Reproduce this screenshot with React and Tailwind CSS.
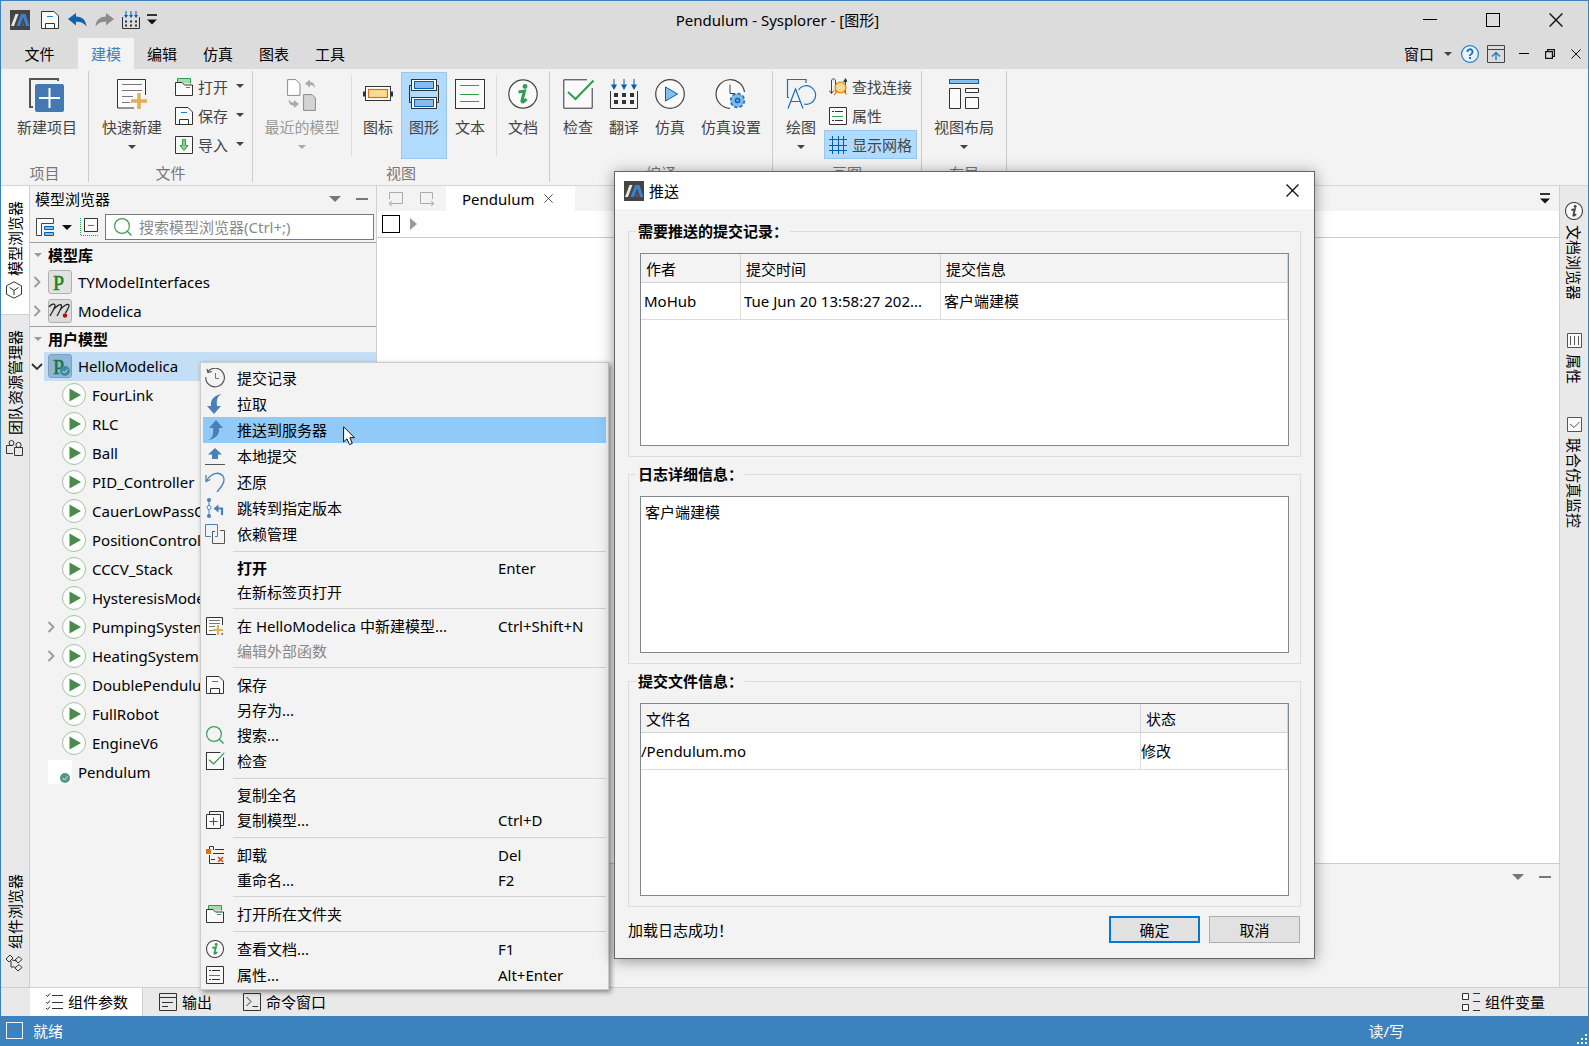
import React from 'react';

/* ---------- icons ---------- */

const Logo = () => (
  <svg width="20" height="20" viewBox="0 0 20 20" className="shrink-0">
    <rect width="20" height="20" fill="#444" />
    <path d="M1 16L5.500 4H8.500L4 16Z" fill="#e6e6e6" />
    <path d="M6.500 16L11 4H15.500L19.500 16H16L13.300 7.500L10 16Z" fill="#3f7fc6" />
    <path d="M11.500 16L13.300 11L14.500 16Z" fill="#3f7fc6" opacity=".5" />
  </svg>
);

const Caret = ({ w = 8, color = '#444' }) => (
  <svg width={w} height={w / 2} viewBox="0 0 8 4" className="shrink-0">
    <path d="M0 0H8L4 4Z" fill={color} />
  </svg>
);

const CaretBar = () => (
  <svg width="10" height="11" viewBox="0 0 10 11" className="shrink-0">
    <path d="M0 1H10" stroke="#333" strokeWidth="2" />
    <path d="M0 5.500H10L5 10.500Z" fill="#111" />
  </svg>
);

const Dash = () => <span className="block h-[2px] w-3 bg-[#777]" />;

const Cross = ({ size = 12, color = '#111' }) => (
  <svg width={size} height={size} viewBox="0 0 12 12" className="shrink-0">
    <path d="M.5 .5L11.500 11.500M11.500 .5L.5 11.500" stroke={color} strokeWidth="1.2" />
  </svg>
);

const Chevron = () => (
  <svg width="8" height="12" viewBox="0 0 8 12" className="shrink-0">
    <path d="M1.500 1L6.500 6L1.500 11" fill="none" stroke="#999" strokeWidth="1.8" />
  </svg>
);

const Svg18 = ({ children }) => (
  <svg width="18" height="18" viewBox="0 0 18 18" fill="none" className="shrink-0">{children}</svg>
);

const Svg30 = ({ children }) => (
  <svg width="30" height="30" viewBox="0 0 30 30" fill="none" className="shrink-0 overflow-visible">{children}</svg>
);

const SaveIcon = () => (
  <Svg18>
    <path d="M.5 .5H13L17.500 5V17.500H.5Z" fill="#fafafa" stroke="#333" />
    <path d="M4.500 17.500V12.500H13.500V17.500" stroke="#333" />
    <path d="M6 5.500H12" stroke="#1a7fc4" />
  </Svg18>
);

const CompileIcon = () => (
  <Svg18>
    <path d="M.5 6V17.500H17.500V6" stroke="#333" />
    <path d="M4 0V6M9 0V6M14 0V6" stroke="#0060b0" />
    <path d="M2 4H6L4 7ZM7 4H11L9 7ZM12 4H16L14 7Z" fill="#0060b0" />
    <path d="M3 10.500H15M3 14.500H15" stroke="#333" strokeWidth="2" strokeDasharray="2 3" />
  </Svg18>
);

const UndoIcon = () => (
  <svg width="19" height="14" viewBox="0 0 19 14" className="shrink-0">
    <path d="M0 6L8 0V3.500C14 3.500 18 7 18.500 13.500C16 10 13 8.500 8 8.800V12.500Z" fill="#0f62ae" />
  </svg>
);

const RedoIcon = () => (
  <svg width="19" height="14" viewBox="0 0 19 14" className="shrink-0">
    <path d="M19 6L11 0V3.500C5 3.500 1 7 .5 13.500C3 10 6 8.500 11 8.800V12.500Z" fill="#8c8c8c" />
  </svg>
);

const HelpIcon = () => (
  <Svg18>
    <circle cx="9" cy="9" r="8.400" fill="#eaf3fa" stroke="#1a7fc4" strokeWidth="1.200" />
    <path d="M6.500 7A2.500 2.500 0 1 1 10.200 9C9.200 9.500 9 10 9 11" stroke="#1a6fb8" strokeWidth="1.800" />
    <rect x="8" y="12" width="2" height="2" fill="#1a6fb8" />
  </Svg18>
);

const CollapseRibbonIcon = () => (
  <Svg18>
    <path d="M.5 .5H17.500V17.500H.5ZM.5 4.500H17.500" stroke="#444" />
    <path d="M9 15V8M5 11.500L9 7.500L13 11.500" stroke="#1a7fc4" strokeWidth="1.400" />
  </Svg18>
);

const RestoreIcon = () => (
  <svg width="10" height="10" viewBox="0 0 10 10" fill="none">
    <path d="M.6 2.600H7.400V9.400H.6Z" stroke="#111" strokeWidth="1.200" />
    <path d="M2.600 2.600V.6H9.400V7.400H7.400" stroke="#111" strokeWidth="1.200" />
  </svg>
);

const NewProjectIcon = () => (
  <svg width="36" height="34" viewBox="0 1 36 34" fill="none" className="shrink-0 overflow-visible">
    <path d="M29 3V1H1V29H4" stroke="#555" strokeWidth="2" />
    <rect x="6" y="6" width="29" height="28" rx="2" fill="#4478b0" />
    <path d="M10 20H31M20.500 10V30" stroke="#fff" strokeWidth="2" />
  </svg>
);

const QuickNewIcon = () => (
  <Svg30>
    <path d="M17 29H.5V.5H28.500V16" fill="#fcfcfc" stroke="#333" />
    <path d="M5 5.500H25M5 11.500H25M5 17.500H16M5 23.500H13" stroke="#777" />
    <path d="M22 14V30M14 22H30" stroke="#dfb05a" strokeWidth="3.500" />
  </Svg30>
);

const RecentIcon = () => (
  <Svg30>
    <path d="M.6 .6H9L13 5V16.400H.6Z" fill="#fff" stroke="#8a8a8a" />
    <path d="M16.600 15.600H25L28.400 19V31.400H16.600Z" fill="#d4d4d4" stroke="#8a8a8a" />
    <path d="M18 4.500L23 .5V3C26 3 28 5 28 9C27 7 25.500 6 23 6V8.500ZM12 25L7 21V23.500C4 23.500 2.500 22.500 2 20C1 24 4 27 7 26.500V29Z" fill="#aaa" />
  </Svg30>
);

const IconViewIcon = () => (
  <Svg30>
    <path d="M0 12.500H3V17.500H0ZM27 12.500H30V17.500H27Z" fill="#333" />
    <rect x="2.500" y="7.500" width="25" height="14" fill="#fff" stroke="#333" />
    <rect x="5.500" y="10.500" width="19" height="8" fill="#f8dc90" stroke="#d96d10" strokeWidth="1.200" />
  </Svg30>
);

const DiagramViewIcon = () => (
  <Svg30>
    <path d="M3 6.500H.5V23.500H3M27 6.500H29.500V23.500H27" stroke="#333" />
    <rect x="2.500" y=".5" width="25" height="11" fill="#fff" stroke="#333" />
    <rect x="5.500" y="2.500" width="19" height="7" fill="#86bdee" stroke="#0060b0" />
    <rect x="2.500" y="18.500" width="25" height="11" fill="#fff" stroke="#333" />
    <rect x="5.500" y="20.500" width="19" height="7" fill="#86bdee" stroke="#0060b0" />
  </Svg30>
);

const TextViewIcon = () => (
  <Svg30>
    <rect x=".5" y=".5" width="29" height="29" fill="#fafafa" stroke="#333" />
    <path d="M5 6.500H24M5 15.500H24M5 22.500H24" stroke="#2f9e4f" />
  </Svg30>
);

const InfoIcon = ({ size = 30, color = '#2f9e4f' }) => (
  <svg width={size} height={size} viewBox="0 0 30 30" fill="none" className="shrink-0">
    <circle cx="15" cy="15" r="14.200" fill="#fafafa" stroke="#444" strokeWidth={size > 20 ? 1.2 : 1.8} />
    <circle cx="17" cy="7.500" r="2.400" fill={color} />
    <path d="M10.500 13L16.500 12L14 21.500C13.600 24 16 23 18.500 20" stroke={color} strokeWidth="3" />
  </svg>
);

const CheckIcon = ({ size = 30 }) => (
  <svg width={size} height={size} viewBox="0 0 30 30" fill="none" className="shrink-0 overflow-visible">
    <path d="M24 .8H.8V29.200H29.200V9" fill="#fafafa" stroke="#333" strokeWidth={size > 20 ? 1 : 1.7} />
    <path d="M5 13L12.500 20L30.500 1.500" stroke="#2f9e4f" strokeWidth="2" />
  </svg>
);

const TranslateIcon = () => (
  <Svg30>
    <path d="M1.500 12V29.500H28.500V12" stroke="#333" />
    <path d="M5 0V7M15 0V7M25 0V7" stroke="#0060b0" />
    <path d="M2 5.500H8L5 11ZM12 5.500H18L15 11ZM22 5.500H28L25 11Z" fill="#0060b0" />
    <path d="M5 16H25M5 23H25" stroke="#333" strokeWidth="4" strokeDasharray="4 4" />
  </Svg30>
);

const SimulateIcon = () => (
  <Svg30>
    <circle cx="15" cy="15" r="14.300" fill="#fafafa" stroke="#444" strokeWidth="1.200" />
    <path d="M10.500 8L22.500 15L10.500 22Z" fill="#86bdee" stroke="#0060b0" />
  </Svg30>
);

const SimSettingsIcon = () => (
  <Svg30>
    <path d="M28.500 13A14.300 14.300 0 1 0 14 29.300" fill="#fafafa" stroke="#444" strokeWidth="1.200" />
    <path d="M14 5.500V14.500H19" stroke="#444" />
    <circle cx="21.500" cy="21.500" r="6.800" fill="#7db8ea" stroke="#1a6fb8" strokeWidth="1.800" strokeDasharray="3.300 2" />
    <circle cx="21.500" cy="21.500" r="6" fill="#7db8ea" />
    <circle cx="21.500" cy="21.500" r="2" stroke="#0060b0" strokeWidth="1.400" />
  </Svg30>
);

const DrawIcon = () => (
  <Svg30>
    <path d="M20 4V.5H1.500V18.500H3M2 29.500L9.500 10L17 29.500M5 22.500H14" stroke="#1a6fb8" strokeWidth="1.200" />
    <path d="M12.500 11A9.300 9.300 0 1 1 18 25" stroke="#1a6fb8" strokeWidth="1.200" />
  </Svg30>
);

const LayoutIcon = () => (
  <Svg30>
    <rect x=".5" y=".5" width="29" height="4" fill="#86bdee" stroke="#0060b0" />
    <path d="M.5 9.500H11.500V29.500H.5ZM16.500 9.500H29.500V13.500H16.500ZM16.500 18.500H29.500V29.500H16.500Z" fill="#fafafa" stroke="#333" />
  </Svg30>
);

const OpenIcon = () => (
  <Svg18>
    <path d="M2.500 5V.5H15.500V5.500" fill="#a5dcae" stroke="#2f9e4f" />
    <path d="M.5 4.500H7L9.500 7H17.500V17.500H.5Z" fill="#fafafa" stroke="#333" />
    <path d="M11 9.500H15" stroke="#2f9e4f" />
  </Svg18>
);

const ImportIcon = () => (
  <Svg18>
    <path d="M.5 .5H17.500V17.500H.5Z" fill="#fafafa" stroke="#333" />
    <path d="M7.500 3.500H10.500V9.500H13L9 14.500L5 9.500H7.500Z" fill="#8fd09b" stroke="#2f9e4f" />
  </Svg18>
);

const FindLinkIcon = () => (
  <Svg18>
    <path d="M2.500 15V3C2.500 0 6.500 0 6.500 3V13.500M0 12.500L2.500 15.500L5 12.500M16.500 15V4" stroke="#444" />
    <path d="M14 4H19L16.500 0Z" fill="#333" />
    <circle cx="11.500" cy="9.500" r="5.400" fill="#f8dc90" stroke="#e08a20" strokeWidth="1.300" />
    <path d="M8 13.500L5 17M15 13.500L17.500 16.500" stroke="#e08a20" strokeWidth="1.300" />
  </Svg18>
);

const PropsIcon = () => (
  <Svg18>
    <path d="M.5 .5H17.500V17.500H.5Z" fill="#fafafa" stroke="#333" />
    <path d="M3 4.500H5M6 4.500H14M3 13.500H5M6 13.500H14" stroke="#333" />
    <path d="M3 9.500H14" stroke="#2f9e4f" />
  </Svg18>
);

const GridIcon = () => (
  <Svg18>
    <path d="M3.500 0V18M9.500 0V18M14.500 0V18M0 3.500H18M0 9.500H18M0 14.500H18" stroke="#0060b0" />
  </Svg18>
);

const SearchIcon = () => (
  <Svg18>
    <circle cx="8" cy="8" r="7.400" stroke="#3a9e58" strokeWidth="1.200" />
    <path d="M13 13L17.500 17.500" stroke="#3a9e58" strokeWidth="1.400" />
  </Svg18>
);

const CubeIcon = () => (
  <Svg18>
    <path d="M8 .8L15.500 4.800V13.200L8 17.200L.5 13.200V4.800Z" stroke="#333" />
    <path d="M3.500 6.500L8 9.500L12.500 6.500M8 9.500V14" stroke="#333" />
  </Svg18>
);

const TeamIcon = () => (
  <Svg18>
    <path d="M7 13.500H.5V5.500H7" stroke="#333" />
    <circle cx="5.500" cy="3" r="2.500" stroke="#333" />
    <path d="M8.500 7.500H16.500V15.500H8.500Z" stroke="#333" />
    <circle cx="12.500" cy="5" r="2.600" stroke="#333" />
  </Svg18>
);

const ComponentIcon = () => (
  <Svg18>
    <path d="M0 5L4 1L7 4L3 8ZM9 6L13 2.500L16 5.500L12 9ZM9 14L13 10.500L16 13.500L12 17ZM6 6L11 7M5 7V13H9" stroke="#333" />
  </Svg18>
);

const SlidersIcon = () => (
  <Svg18>
    <path d="M2.500 2.500H16.500V16.500H2.500Z" fill="#fafafa" stroke="#555" />
    <path d="M5.500 5V14M9.500 5V14M13.500 5V14" stroke="#555" />
  </Svg18>
);

const MonitorIcon = () => (
  <Svg18>
    <path d="M2.500 2.500H16.500V16.500H2.500Z" fill="#fafafa" stroke="#555" />
    <path d="M5 9L9 12.500L14.500 7" stroke="#555" />
  </Svg18>
);

const HistoryIcon = () => (
  <svg width="20" height="20" viewBox="0 0 20 20" fill="none">
    <path d="M3 3.500A9.300 9.300 0 1 1 .8 9" stroke="#555" strokeWidth="1.200" />
    <path d="M2 1L3 4.500L7 3.500" stroke="#555" strokeWidth="1.200" />
    <path d="M10.500 5V10.500H14" stroke="#4a80b8" />
  </svg>
);

const PullIcon = () => (
  <svg width="20" height="20" viewBox="0 0 20 20">
    <path d="M17 0C12 2 11.500 6 12 12H16L9 20L2 12H6C5 6 9 1 17 0Z" fill="#4a80b8" />
  </svg>
);

const PushIcon = () => (
  <svg width="20" height="20" viewBox="0 0 20 20">
    <path d="M3 20C8 18 8.500 14 8 8H4L11 0L18 8H14C15 14 11 19 3 20Z" fill="#4a80b8" />
  </svg>
);

const CommitIcon = () => (
  <svg width="20" height="20" viewBox="0 0 20 20">
    <path d="M10 2L17 8.500H13V13H7V8.500H3Z" fill="#4a80b8" />
    <path d="M0 18.500H20" stroke="#555" />
  </svg>
);

const RevertIcon = () => (
  <svg width="20" height="20" viewBox="0 0 20 20" fill="none">
    <path d="M1.500 9C6 1 14 -1 18 4C21 9 17 14 12 20" stroke="#4a80b8" strokeWidth="1.300" />
    <path d="M1 3V9.500L5.500 7.500" stroke="#4a80b8" strokeWidth="1.300" />
  </svg>
);

const JumpIcon = () => (
  <svg width="20" height="20" viewBox="0 0 20 20" fill="none">
    <path d="M4 2V18" stroke="#4a80b8" />
    <circle cx="4" cy="2" r="2" fill="#4a80b8" />
    <circle cx="4" cy="18" r="2" fill="#4a80b8" />
    <circle cx="4" cy="9.500" r="2" fill="#fff" stroke="#4a80b8" />
    <path d="M17 17V10.500H12" stroke="#4a80b8" strokeWidth="2.200" />
    <path d="M8.500 10.500L13.500 6.500V14.500Z" fill="#4a80b8" />
  </svg>
);

const DependIcon = () => (
  <svg width="20" height="20" viewBox="0 0 20 20" fill="none">
    <path d="M6 12.500H.5V.5H12.500V12.500H10" stroke="#4a80b8" />
    <path d="M10 7.500H7.500V19.500H19.500V6.500H15" stroke="#555" />
  </svg>
);

const NewModelIcon = () => (
  <Svg18>
    <path d="M10 17.500H.5V.5H16.500V8" fill="#fafafa" stroke="#333" />
    <path d="M3 3.500H14M3 6.500H14M3 9.500H9M3 13.500H7" stroke="#777" />
    <path d="M12 8V18M7 13H17" stroke="#dfb05a" strokeWidth="2.200" />
    <path d="M15.500 17H17" stroke="#333" strokeWidth="1.500" />
  </Svg18>
);

const CopyModelIcon = () => (
  <Svg18>
    <path d="M3.500 3V.5H17.500V14.500H14.500" stroke="#333" />
    <path d="M.5 3.500H14.500V17.500H.5Z" fill="#fafafa" stroke="#333" />
    <path d="M7.500 6.500V14.500M3.500 10.500H11.500" stroke="#0060b0" />
  </Svg18>
);

const UnloadIcon = () => (
  <Svg18>
    <path d="M0 3H5V8H0Z" fill="#e07010" />
    <path d="M3.500 3V.5H7.500V4M9 3.500H18M7 7.500H18M3.500 9V17.500H18M5 13.500H9" stroke="#333" />
    <path d="M12 11L17 16M17 11L12 16" stroke="#d9480f" strokeWidth="1.500" />
  </Svg18>
);

const TreeLayoutIcon = () => (
  <Svg18>
    <path d="M.5 .5H17.500V5.500H5.500V17.500H.5Z" fill="#fafafa" stroke="#444" />
    <path d="M8.500 8.500H17.500V11.500H8.500ZM8.500 14.500H17.500V17.500H8.500Z" fill="#86bdee" stroke="#0060b0" />
  </Svg18>
);

const CollapseAllIcon = () => (
  <Svg18>
    <path d="M4.500 .5H17.500V13.500H4.500Z" fill="#fafafa" stroke="#333" />
    <path d="M8 7.500H14" stroke="#2f9e4f" />
    <path d="M.5 0V17.500H18" stroke="#2f9e4f" strokeDasharray="1 1" />
  </Svg18>
);

const ParamsIcon = () => (
  <Svg18>
    <path d="M6 2.500H17M6 9.500H17M6 15.500H17" stroke="#333" />
    <path d="M0 2L1.500 3.500L4 .5M0 9L1.500 10.500L4 7.500M0 15L1.500 16.500L4 13.500" stroke="#333" />
  </Svg18>
);

const OutputIcon = () => (
  <Svg18>
    <path d="M.5 .5H17.500V17.500H.5ZM.5 4.500H17.500M3 9.500H14M3 13.500H9" stroke="#333" />
  </Svg18>
);

const ConsoleIcon = () => (
  <Svg18>
    <path d="M.5 .5H17.500V17.500H.5ZM3.500 4L8 8.500L3.500 13M9.500 13.500H15" stroke="#333" />
  </Svg18>
);

const VarsIcon = () => (
  <Svg18>
    <path d="M.5 .5H6.500V6.500H.5ZM.5 11.500H6.500V17.500H.5Z" fill="#fff" stroke="#333" />
    <path d="M11 .5H18M11 8.500H18M11 17.500H18" stroke="#333" />
  </Svg18>
);

const PackageIcon = ({ selected }) => (
  <svg width="24" height="24" viewBox="0 0 24 24" className="shrink-0">
    <rect x=".5" y=".5" width="23" height="23" rx="2.500" fill={selected ? '#8fb6d8' : '#e2e2e2'} stroke={selected ? '#7f9fbc' : '#b0b0b0'} />
    <text x="5" y="19.500" fontFamily="Liberation Serif, serif" fontSize="20" fill={selected ? '#127a4a' : '#128a12'} stroke={selected ? '#127a4a' : '#128a12'} strokeWidth=".5">P</text>
    {selected && (
      <g>
        <circle cx="17" cy="17" r="5" fill="#3f8ca0" />
        <path d="M14.500 17L16.500 19L19.500 15.500" fill="none" stroke="#d5ecf2" />
      </g>
    )}
  </svg>
);

const ModelicaIcon = () => (
  <svg width="24" height="24" viewBox="0 0 24 24" fill="none" className="shrink-0">
    <rect x=".5" y=".5" width="23" height="23" rx="2.500" fill="#dcdcdc" stroke="#b0b0b0" />
    <path d="M1 8C3 5 7 4 7 6.500C7 9 4 13 2 17M5 11C8 7 13 4 13.500 6.500C14 9 11 13 9 17M12 11C15 7 20 4 21 6C21.500 8 19 11 17.500 14" stroke="#222" strokeWidth="1.300" />
    <circle cx="17" cy="16.500" r="2.200" fill="#b01010" />
  </svg>
);

const ModelIcon = () => (
  <svg width="24" height="24" viewBox="0 0 24 24" className="shrink-0">
    <circle cx="12" cy="12" r="11.500" fill="#fff" stroke="#9cc49f" />
    <path d="M7.500 5.500L19 12L7.500 18.500Z" fill="#4a8a4a" />
  </svg>
);

const PlainModelIcon = () => (
  <svg width="24" height="24" viewBox="0 0 24 24" className="shrink-0">
    <rect width="24" height="24" fill="#fff" />
    <circle cx="17" cy="18" r="5" fill="#4f9a80" />
    <path d="M14.500 18L16.500 20L19.500 16.500" fill="none" stroke="#e0f2ec" />
  </svg>
);

const Cursor = () => (
  <svg width="13" height="20" viewBox="0 0 13 20" className="pointer-events-none absolute left-[342px] top-[425px] z-20">
    <path d="M.6 .8V16L4 12.800L6.500 18.600L9.300 17.400L6.900 11.700H11.500Z" fill="#fff" stroke="#111" />
  </svg>
);

/* ---------- title and menu bar ---------- */

const menus = ['编辑', '仿真', '图表', '工具'];

const TitleBar = () => (
  <header className="bg-[#dcdcdc]">
    <div className="flex h-[37px] items-center pr-px">
      <div className="flex items-center pl-[9px]">
        <Logo />
        <button aria-label="保存" className="ml-[11px]"><SaveIcon /></button>
        <button aria-label="撤销" className="ml-[9px]"><UndoIcon /></button>
        <button aria-label="重做" className="ml-2"><RedoIcon /></button>
        <button aria-label="翻译" className="ml-2"><CompileIcon /></button>
        <button aria-label="更多" className="ml-[7px]"><CaretBar /></button>
      </div>
      <h1 className="flex-1 text-center">Pendulum - Sysplorer - [图形]</h1>
      <button aria-label="最小化" className="flex w-[63px] justify-center"><span className="h-px w-[14px] bg-black" /></button>
      <button aria-label="最大化" className="flex w-[63px] justify-center"><span className="size-[14px] border border-black" /></button>
      <button aria-label="关闭" className="flex w-[63px] justify-center"><Cross size={14} /></button>
    </div>
    <nav className="flex h-[31px] items-stretch">
      <button className="w-[77px]">文件</button>
      <button className="w-14 bg-[#f3f3f3] text-[#3c82be]">建模</button>
      {menus.map((m) => (
        <button key={m} className="w-14">{m}</button>
      ))}
      <div className="ml-auto flex items-center pr-[7px]">
        <button className="flex items-center gap-[10px]">窗口<Caret /></button>
        <button aria-label="帮助" className="ml-[9px]"><HelpIcon /></button>
        <button aria-label="折叠功能区" className="ml-2"><CollapseRibbonIcon /></button>
        <button aria-label="最小化子窗口" className="ml-[14px]"><span className="block h-px w-[10px] bg-black" /></button>
        <button aria-label="还原子窗口" className="ml-4"><RestoreIcon /></button>
        <button aria-label="关闭子窗口" className="ml-4"><Cross size={10} /></button>
      </div>
    </nav>
  </header>
);

/* ---------- ribbon ---------- */

const BigButton = ({ icon, label, caret, active, disabled, wide }) => (
  <button
    disabled={disabled}
    className={`flex h-[87px] shrink-0 flex-col items-center border pt-[6px] ${wide ? 'w-[76px]' : 'w-[46px]'} ${active ? 'border-[#99c8ee] bg-[#b0dbff]' : 'border-transparent'} ${disabled ? 'text-[#999]' : 'text-[#444]'}`}
  >
    <span className="flex h-[30px] justify-center">{icon}</span>
    <span className="mt-2 whitespace-nowrap">{label}</span>
    {caret && <span className="mt-2"><Caret color={disabled ? '#aaa' : '#444'} /></span>}
  </button>
);

const SmallButton = ({ icon, label, caret, active }) => (
  <button className={`flex h-[29px] items-center gap-[5px] border px-1 text-[#444] ${active ? 'border-[#99c8ee] bg-[#b0dbff]' : 'border-transparent'}`}>
    {icon}
    <span>{label}</span>
    {caret && <span className="mb-[2px] ml-[3px]"><Caret /></span>}
  </button>
);

const RibbonGroup = ({ label, className = '', children }) => (
  <section className="flex">
    <div className="flex flex-col">
      <div className={`flex h-[93px] pt-[3px] ${className}`}>{children}</div>
      <div className="text-center leading-[23px] text-[#777]">{label}</div>
    </div>
    <div className="mb-[3px] mt-[2px] w-px bg-[#ccc]" />
  </section>
);

const Divider = () => <div className="mx-[3px] my-[3px] h-[81px] w-px shrink-0 bg-[#dcdcdc]" />;

const Ribbon = () => (
  <div className="flex border-b border-[#d5d5d5] bg-[#f3f3f3]">
    <RibbonGroup label="项目" className="pl-2 pr-[3px]">
      <BigButton wide icon={<NewProjectIcon />} label="新建项目" />
    </RibbonGroup>
    <RibbonGroup label="文件" className="pl-[5px] pr-[3px]">
      <BigButton wide caret icon={<QuickNewIcon />} label="快速新建" />
      <div className="flex flex-col">
        <SmallButton caret icon={<OpenIcon />} label="打开" />
        <SmallButton caret icon={<SaveIcon />} label="保存" />
        <SmallButton caret icon={<ImportIcon />} label="导入" />
      </div>
    </RibbonGroup>
    <RibbonGroup label="视图" className="pl-[11px] pr-[3px]">
      <div className="mr-2"><BigButton wide caret disabled icon={<RecentIcon />} label="最近的模型" /></div>
      <Divider />
      <BigButton icon={<IconViewIcon />} label="图标" />
      <BigButton active icon={<DiagramViewIcon />} label="图形" />
      <BigButton icon={<TextViewIcon />} label="文本" />
      <Divider />
      <BigButton icon={<InfoIcon />} label="文档" />
    </RibbonGroup>
    <RibbonGroup label="编译" className="pl-[5px] pr-[3px]">
      <BigButton icon={<CheckIcon />} label="检查" />
      <BigButton icon={<TranslateIcon />} label="翻译" />
      <BigButton icon={<SimulateIcon />} label="仿真" />
      <BigButton wide icon={<SimSettingsIcon />} label="仿真设置" />
    </RibbonGroup>
    <RibbonGroup label="画图" className="pl-[5px] pr-1">
      <BigButton caret icon={<DrawIcon />} label="绘图" />
      <div className="flex flex-col">
        <SmallButton icon={<FindLinkIcon />} label="查找连接" />
        <SmallButton icon={<PropsIcon />} label="属性" />
        <SmallButton active icon={<GridIcon />} label="显示网格" />
      </div>
    </RibbonGroup>
    <RibbonGroup label="布局" className="px-1">
      <BigButton wide caret icon={<LayoutIcon />} label="视图布局" />
    </RibbonGroup>
  </div>
);

/* ---------- side rails ---------- */

const LeftTab = ({ label, icon, active }) => (
  <button className={`flex flex-col items-center gap-[5px] py-[15px] ${active ? 'border-b border-[#d0d0d0] bg-white' : ''}`}>
    <span className="rotate-180 [text-orientation:sideways] [writing-mode:vertical-rl]">{label}</span>
    {icon}
  </button>
);

const LeftRail = () => (
  <aside className="flex w-[29px] shrink-0 flex-col border-r border-[#d0d0d0] bg-[#e9e9e9]">
    <LeftTab active label="模型浏览器" icon={<CubeIcon />} />
    <LeftTab label="团队资源管理器" icon={<TeamIcon />} />
    <div className="flex-1" />
    <LeftTab label="组件浏览器" icon={<ComponentIcon />} />
  </aside>
);

const RightTab = ({ label, icon }) => (
  <button className="flex flex-col items-center gap-[5px] pb-[15px]">
    {icon}
    <span className="[text-orientation:sideways] [writing-mode:vertical-rl]">{label}</span>
  </button>
);

const RightRail = () => (
  <aside className="flex w-[29px] shrink-0 flex-col gap-4 border-l border-[#d0d0d0] bg-[#e9e9e9] pt-4">
    <RightTab label="文档浏览器" icon={<InfoIcon size={18} color="#444" />} />
    <RightTab label="属性" icon={<SlidersIcon />} />
    <RightTab label="联合仿真监控" icon={<MonitorIcon />} />
  </aside>
);

/* ---------- model browser ---------- */

const models = [
  { name: 'FourLink' },
  { name: 'RLC' },
  { name: 'Ball' },
  { name: 'PID_Controller' },
  { name: 'CauerLowPassOPV' },
  { name: 'PositionControl' },
  { name: 'CCCV_Stack' },
  { name: 'HysteresisModel' },
  { name: 'PumpingSystem', folder: true },
  { name: 'HeatingSystem', folder: true },
  { name: 'DoublePendulum' },
  { name: 'FullRobot' },
  { name: 'EngineV6' },
];

const SectionTitle = ({ children }) => (
  <h3 className="flex h-[25px] items-center gap-[6px] pb-[2px] pl-1 font-bold">
    <Caret color="#999" />{children}
  </h3>
);

const ModelBrowser = () => (
  <section className="flex w-[347px] shrink-0 flex-col border-r border-[#d0d0d0] bg-[#f3f3f3]">
    <div className="flex h-[26px] items-center pl-[5px] pr-2">
      <h2 className="flex-1">模型浏览器</h2>
      <button aria-label="选项"><Caret w={12} color="#777" /></button>
      <button aria-label="隐藏" className="ml-[15px]"><Dash /></button>
    </div>
    <div className="flex items-center border-b border-[#a0a0a0] py-[2px] pl-[6px] pr-[2px]">
      <button className="flex items-center gap-2" aria-label="布局"><TreeLayoutIcon /><Caret w={10} color="#111" /></button>
      <button aria-label="全部折叠" className="ml-2 mr-[7px]"><CollapseAllIcon /></button>
      <label className="flex h-[26px] flex-1 items-center gap-[7px] border border-[#7a7a7a] bg-white pl-2">
        <SearchIcon />
        <input aria-label="搜索模型浏览器" placeholder="搜索模型浏览器(Ctrl+;)" className="w-full outline-none placeholder:text-[#8a8a8a]" />
      </label>
    </div>
    <div className="border-b border-[#a0a0a0]">
      <SectionTitle>模型库</SectionTitle>
      <ul>
        <li className="flex h-[29px] items-center pb-[2px] pl-[3px]">
          <Chevron /><span className="ml-[7px]"><PackageIcon /></span><span className="ml-[6px]">TYModelInterfaces</span>
        </li>
        <li className="flex h-[29px] items-center pb-[2px] pl-[3px]">
          <Chevron /><span className="ml-[7px]"><ModelicaIcon /></span><span className="ml-[6px]">Modelica</span>
        </li>
      </ul>
    </div>
    <SectionTitle>用户模型</SectionTitle>
    <ul>
      <li className="flex h-[29px] items-center">
        <span className="flex w-[14px] justify-center">
          <svg width="12" height="8" viewBox="0 0 12 8"><path d="M1 1L6 6L11 1" fill="none" stroke="#333" strokeWidth="1.800" /></svg>
        </span>
        <div className="flex h-full flex-1 items-center gap-[6px] bg-[#c4def6] pb-[2px] pl-1"><PackageIcon selected />HelloModelica</div>
      </li>
      {models.map((m) => (
        <li key={m.name} className="flex h-[29px] items-center pb-[2px] pl-[17px]">
          <span className="w-[15px]">{m.folder && <Chevron />}</span>
          <ModelIcon />
          <span className="ml-[6px]">{m.name}</span>
        </li>
      ))}
      <li className="flex h-[29px] items-center gap-[6px] pb-[2px] pl-[18px]"><PlainModelIcon />Pendulum</li>
    </ul>
  </section>
);

/* ---------- editor ---------- */

const Editor = () => (
  <main className="flex min-w-0 flex-1 flex-col bg-white">
    <div className="flex h-[25px] items-center bg-[#f3f3f3] pl-[11px] pr-[9px]">
      <svg width="46" height="15" viewBox="0 0 46 15" fill="none" stroke="#aaa">
        <path d="M1.500 8V1.500H14.500V12.500H1M4 10L1 12.500L4 15M32.500 8V1.500H44.500V8M32.500 8V12.500H45M43 10L46 12.500L43 15" />
      </svg>
      <div className="ml-3 flex h-full w-[129px] items-center gap-[10px] bg-white pl-4">
        Pendulum
        <button aria-label="关闭标签页"><Cross size={9} color="#444" /></button>
      </div>
      <button aria-label="标签页列表" className="ml-auto"><CaretBar /></button>
    </div>
    <div className="flex h-[27px] items-center gap-[10px] border-b border-[#ccc] pl-[5px]">
      <span className="size-[18px] border border-black" />
      <svg width="7" height="12" viewBox="0 0 7 12"><path d="M0 0L7 6L0 12Z" fill="#999" /></svg>
    </div>
    <div className="flex-1" />
    <div className="flex h-[124px] justify-end border-t border-[#ccc] bg-[#f3f3f3] pr-2">
      <div className="flex h-[26px] items-center gap-[15px]">
        <button aria-label="选项"><Caret w={12} color="#777" /></button>
        <button aria-label="隐藏"><Dash /></button>
      </div>
    </div>
  </main>
);

/* ---------- context menu ---------- */

const menuGroups = [
  [
    { label: '提交记录', icon: <HistoryIcon /> },
    { label: '拉取', icon: <PullIcon /> },
    { label: '推送到服务器', icon: <PushIcon />, active: true },
    { label: '本地提交', icon: <CommitIcon /> },
    { label: '还原', icon: <RevertIcon /> },
    { label: '跳转到指定版本', icon: <JumpIcon /> },
    { label: '依赖管理', icon: <DependIcon /> },
  ],
  [
    { label: '打开', key: 'Enter', bold: true },
    { label: '在新标签页打开' },
  ],
  [
    { label: '在 HelloModelica 中新建模型...', key: 'Ctrl+Shift+N', icon: <NewModelIcon /> },
    { label: '编辑外部函数', disabled: true },
  ],
  [
    { label: '保存', icon: <SaveIcon /> },
    { label: '另存为...' },
    { label: '搜索...', icon: <SearchIcon /> },
    { label: '检查', icon: <CheckIcon size={18} /> },
  ],
  [
    { label: '复制全名' },
    { label: '复制模型...', key: 'Ctrl+D', icon: <CopyModelIcon /> },
  ],
  [
    { label: '卸载', key: 'Del', icon: <UnloadIcon /> },
    { label: '重命名...', key: 'F2' },
  ],
  [{ label: '打开所在文件夹', icon: <OpenIcon /> }],
  [
    { label: '查看文档...', key: 'F1', icon: <InfoIcon size={18} /> },
    { label: '属性...', key: 'Alt+Enter', icon: <PropsIcon /> },
  ],
];

const ContextMenu = () => (
  <div role="menu" className="absolute left-[199px] top-[361px] z-10 w-[409px] border border-[#ccc] bg-[#f3f3f3] px-[2px] pb-px pt-[2px] shadow-[2px_2px_5px_rgba(0,0,0,0.45)]">
    {menuGroups.map((group, i) => (
      <div key={i}>
        {i > 0 && <div className="my-1 ml-[30px] h-px bg-[#d2d2d2]" />}
        {group.map((item) => (
          <button
            key={item.label}
            role="menuitem"
            disabled={item.disabled}
            className={`flex w-full items-center text-left ${item.icon ? 'h-[26px]' : 'h-6'} ${item.active ? 'bg-[#91c9f7]' : ''} ${item.bold ? 'font-bold' : ''} ${item.disabled ? 'text-[#888]' : ''}`}
          >
            <span className="mr-[10px] flex w-6 shrink-0 justify-center">{item.icon}</span>
            <span className="w-[261px] whitespace-nowrap">{item.label}</span>
            <span className="whitespace-nowrap font-normal">{item.key}</span>
          </button>
        ))}
      </div>
    ))}
  </div>
);

/* ---------- push dialog ---------- */

const Group = ({ title, children }) => (
  <fieldset className="mb-[7px] border border-[#dcdcdc] px-[11px] pb-[10px]">
    <legend className="-ml-1 px-[2px] font-bold">{title}</legend>
    <div className="pt-3">{children}</div>
  </fieldset>
);

const th = 'h-[29px] border-b border-r border-[#d2d2d2] bg-[#f3f3f3] pl-[5px] pt-[2px] text-left font-normal';
const td = 'h-[37px] truncate border-b border-r border-[#dcdcdc]';

const PushDialog = () => (
  <div role="dialog" aria-label="推送" className="absolute left-[613px] top-[170px] z-30 w-[701px] border border-[#666] bg-[#f3f3f3] shadow-[0_2px_14px_rgba(0,0,0,0.4)]">
    <div className="flex h-[37px] items-center gap-[5px] bg-white pl-[9px] pr-[15px]">
      <Logo />
      <span className="flex-1">推送</span>
      <button aria-label="关闭"><Cross size={13} /></button>
    </div>
    <div className="px-[13px] pb-[15px] pt-3">
      <Group title="需要推送的提交记录：">
        <div className="h-[193px] border border-[#828790] bg-white">
          <table className="w-full table-fixed border-separate border-spacing-0">
            <thead>
              <tr><th className={`${th} w-[100px]`}>作者</th><th className={`${th} w-[200px]`}>提交时间</th><th className={th}>提交信息</th></tr>
            </thead>
            <tbody>
              <tr>
                <td className={`${td} pl-[3px]`}>MoHub</td>
                <td className={`${td} pl-[3px]`}>Tue Jun 20 13:58:27 202...</td>
                <td className={`${td} pl-[3px]`}>客户端建模</td>
              </tr>
            </tbody>
          </table>
        </div>
      </Group>
      <Group title="日志详细信息：">
        <textarea aria-label="日志详细信息" defaultValue="客户端建模" className="block h-[157px] w-full resize-none border border-[#828790] bg-white px-1 py-[5px] outline-none" />
      </Group>
      <Group title="提交文件信息：">
        <div className="h-[193px] border border-[#828790] bg-white">
          <table className="w-full table-fixed border-separate border-spacing-0">
            <thead>
              <tr><th className={`${th} w-[500px]`}>文件名</th><th className={th}>状态</th></tr>
            </thead>
            <tbody>
              <tr><td className={td}>/Pendulum.mo</td><td className={td}>修改</td></tr>
            </tbody>
          </table>
        </div>
      </Group>
      <div className="flex items-center gap-[9px] pr-px pt-[2px]">
        <span className="flex-1">加载日志成功！</span>
        <button className="h-[27px] w-[91px] border-2 border-[#0078d7] bg-[#e1e1e1]">确定</button>
        <button className="h-[27px] w-[91px] border border-[#adadad] bg-[#e1e1e1]">取消</button>
      </div>
    </div>
  </div>
);

/* ---------- bottom bars ---------- */

const BottomBar = () => (
  <div className="flex h-[29px] items-stretch border-t border-[#d0d0d0] bg-[#e9e9e9] pl-[29px]">
    <button className="flex w-[113px] items-center gap-1 border-r border-[#d0d0d0] bg-white pl-4"><ParamsIcon />组件参数</button>
    <button className="ml-4 flex items-center gap-[5px]"><OutputIcon />输出</button>
    <button className="ml-[31px] flex items-center gap-[5px]"><ConsoleIcon />命令窗口</button>
    <button className="ml-auto mr-[43px] flex items-center gap-[5px]"><VarsIcon />组件变量</button>
  </div>
);

const StatusBar = () => (
  <footer className="flex h-[29px] items-center bg-[#3c82be] pl-[5px] text-white">
    <span className="size-[17px] border border-white/90" />
    <span className="ml-[10px] flex-1">就绪</span>
    <span className="mr-[172px]">读/写</span>
    <svg width="11" height="11" viewBox="0 0 11 11" className="mr-px self-end fill-white">
      <path d="M9 0H11V2H9ZM5 4H7V6H5ZM9 4H11V6H9ZM1 8H3V10H1ZM5 8H7V10H5ZM9 8H11V10H9Z" />
    </svg>
  </footer>
);

const App = () => (
  <div className="relative flex min-h-screen flex-col overflow-hidden border border-[#3c82be] bg-[#f3f3f3] font-['Noto_Sans','Noto_Sans_CJK_SC',sans-serif] text-[15px] leading-5 text-black">
    <TitleBar />
    <Ribbon />
    <div className="flex flex-1">
      <LeftRail />
      <ModelBrowser />
      <Editor />
      <RightRail />
    </div>
    <BottomBar />
    <StatusBar />
    <ContextMenu />
    <Cursor />
    <PushDialog />
  </div>
);

export default App;
